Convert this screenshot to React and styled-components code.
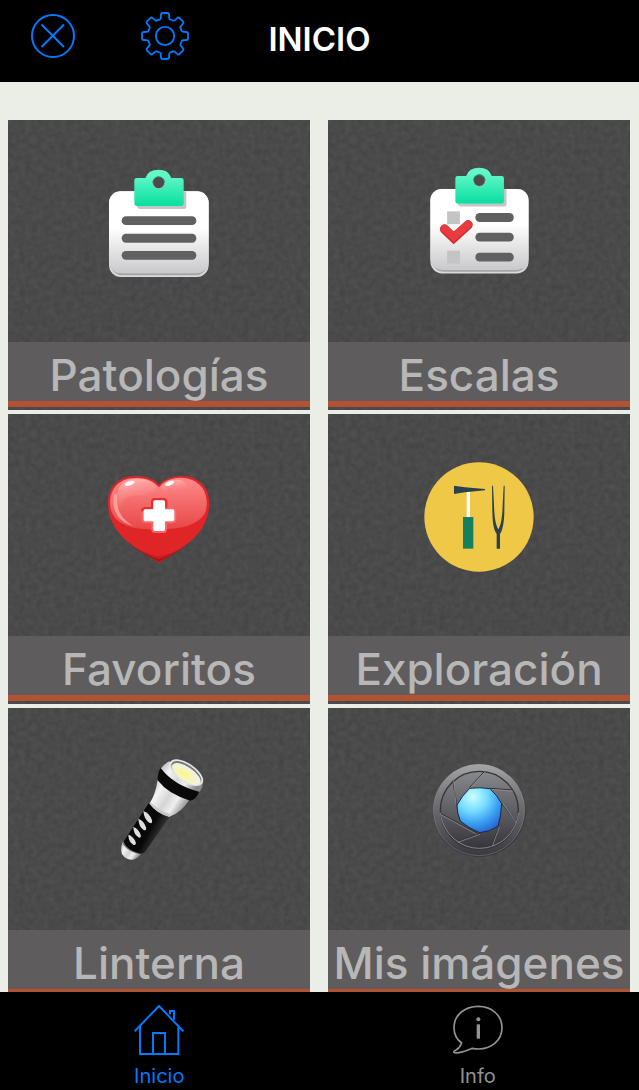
import { useState } from "react";
import styled, { createGlobalStyle } from "styled-components";

const TEETH = [0, 45, 90, 135, 180, 225, 270, 315];

const CloseIcon = () => (
	<svg width="44" height="44" viewBox="0 0 44 44" fill="none" stroke="currentColor" strokeWidth="2">
		<circle cx="22" cy="22" r="21" />
		<path d="M10.5 10.5 33 33M33 10.5 10.5 33" />
	</svg>
);

const GearIcon = () => (
	<svg width="48" height="48" viewBox="-72 -72 144 144" fill="none" stroke="currentColor" strokeWidth="5.5" strokeLinejoin="round">
		{TEETH.map((angle) => (
			<path
				key={angle}
				transform={`rotate(${angle})`}
				d="M-13 -51L-12 -64Q-12 -69 -7 -69H7Q12 -69 12 -64L13 -51L27 -45"
			/>
		))}
		<circle r="27.5" />
	</svg>
);

const HomeIcon = () => (
	<svg width="50" height="50" viewBox="102 75 150 150" fill="none" stroke="currentColor" strokeWidth="6">
		<path d="M104 154 177 78 250 154M120 139V222H235V139" />
		<path d="M159 222V159H195V222M210 103V93H222V119" />
	</svg>
);

const InfoIcon = () => (
	<svg width="50" height="50" viewBox="99 76 150 150" fill="none" stroke="currentColor" strokeWidth="5">
		<path
			strokeLinejoin="round"
			d="M125 190C109 178 102 162 102 144C102 106 134 80 175 80C216 80 246 108 246 144C246 182 214 208 175 208C168 208 162 207 157 206C141 211 123 222 104 219C99 218 102 214 107 212C116 207 121 200 125 190Z"
		/>
		<path d="M175 134V177" strokeWidth="10" />
		<circle cx="175" cy="119" r="6" fill="currentColor" stroke="none" />
	</svg>
);

const ClipboardBase = ({ id, children }) => (
	<>
		<defs>
			<linearGradient id={`${id}-paper`} x1="0" y1="0" x2="0" y2="1">
				<stop offset="0.45" stopColor="#fff" />
				<stop offset="1" stopColor="#c9c9cb" />
			</linearGradient>
			<linearGradient id={`${id}-clip`} x1="0" y1="0" x2="0" y2="1">
				<stop offset="0.15" stopColor="#62f8c8" />
				<stop offset="1" stopColor="#08dfa0" />
			</linearGradient>
		</defs>
		<rect x="57" y="124" width="299" height="257" rx="36" fill="#d9d9db" />
		<path d="M61 340Q72 370 96 370H317Q341 370 352 340V350Q340 376 316 376H98Q74 376 61 350Z" fill="#a5a5a8" />
		<rect x="57" y="124" width="299" height="245" rx="34" fill={`url(#${id}-paper)`} />
		<path d="M142 124H285Q289 124 289 130V170Q289 177 282 177H151Q142 177 140 168Z" fill="#c4c5c7" />
		<path
			fillRule="evenodd"
			fill={`url(#${id}-clip)`}
			d="M140 84H166Q174 59 206 59Q236 59 244 84H274Q281 84 281 91V160Q281 168 273 168H141Q133 168 133 160V91Q133 84 140 84ZM206 79A18 18 0 1 0 206 116A18 18 0 1 0 206 79Z"
		/>
		<circle cx="206" cy="98" r="18" fill="#4b4b4b" stroke="#b5eddd" strokeWidth="2" />
		<path d="M189 98A17 17 0 0 1 223 98" fill="none" stroke="#087d60" strokeWidth="3" />
		{children}
	</>
);

const PathologyArt = () => (
	<ClipboardBase id="pathology">
		<g fill="#606060">
			<rect x="95" y="199" width="224" height="26" rx="13" />
			<rect x="95" y="251" width="224" height="27" rx="13" />
			<rect x="95" y="303" width="224" height="26" rx="13" />
		</g>
	</ClipboardBase>
);

const ScalesArt = () => (
	<g transform="translate(5 -5) scale(0.985)">
		<ClipboardBase id="scales">
			<g fill="#c4c4c4">
				<rect x="108" y="192" width="39" height="39" />
				<rect x="108" y="312" width="39" height="39" />
			</g>
			<g fill="#606060">
				<rect x="194" y="197" width="117" height="27" rx="13" />
				<rect x="194" y="257" width="117" height="27" rx="13" />
				<rect x="194" y="318" width="117" height="27" rx="13" />
			</g>
			<path d="M100 246 128 273 172 233" fill="none" stroke="#d5252a" strokeWidth="28" strokeLinecap="round" />
			<path d="M100 244 128 270 172 231" fill="none" stroke="#e93a3e" strokeWidth="24" strokeLinecap="round" />
		</ClipboardBase>
	</g>
);

const HeartArt = () => (
	<>
		<defs>
			<linearGradient id="heart-shine" x1="0" y1="0" x2="0" y2="1">
				<stop offset="0" stopColor="#ff8a8a" />
				<stop offset="1" stopColor="#e74747" />
			</linearGradient>
			<linearGradient id="heart-gloss" x1="0" y1="0" x2="0.3" y2="1">
				<stop offset="0" stopColor="#ffc4c2" />
				<stop offset="1" stopColor="#fa7777" stopOpacity="0" />
			</linearGradient>
		</defs>
		<path d="M207 105C190 86 166 77 135 78C86 79 54 110 54 160C54 204 76 245 114 276C143 300 177 320 207 339C237 320 270 300 299 276C337 245 358 204 358 160C358 110 325 79 277 78C247 78 222 87 207 105Z" fill="#e02527" />
		<path d="M108 273Q152 308 207 327Q261 308 305 273Q270 303 207 337Q143 303 108 273Z" fill="#a91619" />
		<path d="M119 282Q161 309 207 320Q252 309 294 282Q258 307 207 327Q155 307 119 282Z" fill="#c51e20" />
		<path d="M207 112C190 92 166 83 136 84C90 85 61 112 60 158C60 181 68 197 82 211C119 240 168 239 213 238C266 237 325 229 346 187C359 148 345 96 290 85C254 79 223 91 207 112Z" fill="url(#heart-shine)" />
		<path d="M83 134C83 101 111 87 143 86C168 86 189 96 200 109C196 131 175 138 145 136C113 134 94 151 91 180C80 168 80 150 83 134Z" fill="url(#heart-gloss)" />
		<path d="M215 110C228 93 251 86 270 90C291 95 298 111 287 124C271 139 222 136 215 124Z" fill="url(#heart-gloss)" />
		<path d="M73 131C63 169 78 216 130 228C95 207 76 179 82 132Z" fill="#ffaaa6" opacity="0.8" />
		<ellipse cx="119" cy="100" rx="15" ry="6" transform="rotate(-18 119 100)" fill="#fff" />
		<ellipse cx="239" cy="100" rx="14" ry="6" transform="rotate(-22 239 100)" fill="#fff" />
		<path
			d="M195 151H220Q225 151 225 156V178H248Q253 178 253 184V208Q253 214 248 214H225V237Q225 243 220 243H195Q190 243 190 237V214H166Q161 214 161 208V184Q161 178 166 178H190V156Q190 151 195 151Z"
			fill="#fff"
			stroke="#f9686b"
			strokeWidth="12"
			paintOrder="stroke"
		/>
		<path d="M156 184Q156 174 166 174H186V155Q186 147 195 147H220Q229 147 229 155V173" fill="none" stroke="#e52c2e" strokeWidth="6" />
	</>
);

const ExamArt = () => (
	<>
		<circle cx="207" cy="201" r="164" fill="#efc847" />
		<path d="M170 126H180V204H170Z" fill="#fff" />
		<path d="M132 107 165 112 225 117V121L165 127 132 132Z" fill="#2b424d" />
		<path d="M159 201H190V296H159Z" fill="#15805f" />
		<path
			d="M246 107H249L252 165C253 202 257 225 265 238C273 225 277 202 278 165L281 107H284L283 187C282 220 278 241 270 252V296H260V252C251 240 248 220 247 187Z"
			fill="#2b424d"
		/>
	</>
);

const TorchArt = () => (
	<>
		<defs>
			<linearGradient id="torch-metal" x1="0" y1="0" x2="1" y2="0.6">
				<stop offset="0" stopColor="#a5a5a5" />
				<stop offset="0.3" stopColor="#f5f5f5" />
				<stop offset="0.55" stopColor="#d5d5d5" />
				<stop offset="0.75" stopColor="#efefef" />
				<stop offset="1" stopColor="#8a8a8a" />
			</linearGradient>
			<linearGradient id="torch-grip" x1="0" y1="0" x2="1" y2="0.6">
				<stop offset="0" stopColor="#050505" />
				<stop offset="0.65" stopColor="#080808" />
				<stop offset="0.85" stopColor="#343434" />
				<stop offset="1" stopColor="#050505" />
			</linearGradient>
			<radialGradient id="torch-light" cx="0.45" cy="0.6" r="0.55">
				<stop offset="0" stopColor="#fbf77b" />
				<stop offset="0.45" stopColor="#f7f6b4" />
				<stop offset="1" stopColor="#eef1ed" />
			</radialGradient>
		</defs>
		<path d="M99 304Q90 325 96 342Q108 361 128 359Q145 355 154 340Z" fill="url(#torch-metal)" />
		<path d="M99 307Q120 333 154 340L152 343Q115 337 98 312Z" fill="#737373" />
		<path d="M178 187Q200 217 240 229L165 336Q158 344 143 339Q112 329 100 306Z" fill="url(#torch-grip)" />
		<g fill="#dedede">
			<path d="M160 213Q177 218 186 240Q188 253 178 248Q162 238 160 213Z" />
			<path d="M145 236Q161 241 168 262Q170 274 161 270Q146 260 145 236Z" />
			<path d="M130 261Q145 266 152 284Q154 296 145 292Q130 282 130 261Z" />
			<path d="M115 284Q130 289 137 306Q139 317 130 314Q115 305 115 284Z" />
		</g>
		<path d="M203 119Q240 160 298 180Q274 218 238 230Q199 218 179 190Q197 162 203 119Z" fill="url(#torch-metal)" />
		<path d="M180 185Q203 210 242 223L238 231Q198 219 178 191Z" fill="#c8c8c8" />
		<path d="M238 64Q219 74 212 86Q251 136 327 157Q338 146 338 129Z" fill="url(#torch-metal)" />
		<path d="M212 84Q251 136 327 155Q321 176 301 182Q235 163 203 121Q203 98 212 84Z" fill="#090909" />
		<ellipse cx="289" cy="98" rx="58" ry="28" transform="rotate(34 289 98)" fill="#e4e4e4" />
		<ellipse cx="289" cy="98" rx="52" ry="23" transform="rotate(34 289 98)" fill="#777" />
		<ellipse cx="289" cy="102" rx="50" ry="21" transform="rotate(34 289 102)" fill="url(#torch-light)" />
	</>
);

const LensArt = () => (
	<>
		<defs>
			<linearGradient id="lens-ring" x1="0" y1="0" x2="0" y2="1">
				<stop offset="0" stopColor="#a5a5a5" />
				<stop offset="0.35" stopColor="#77777a" />
				<stop offset="1" stopColor="#39393f" />
			</linearGradient>
			<linearGradient id="lens-blades" x1="0" y1="0" x2="0" y2="1">
				<stop offset="0" stopColor="#88898c" />
				<stop offset="1" stopColor="#35343b" />
			</linearGradient>
			<radialGradient id="lens-glass" cx="0.35" cy="0.2" r="0.85">
				<stop offset="0" stopColor="#caffff" />
				<stop offset="0.38" stopColor="#78dcff" />
				<stop offset="0.7" stopColor="#399ff2" />
				<stop offset="1" stopColor="#2762d0" />
			</radialGradient>
		</defs>
		<ellipse cx="208" cy="214" rx="139" ry="137" fill="#303033" opacity="0.65" />
		<circle cx="207" cy="210" r="137" fill="url(#lens-ring)" stroke="#aaaaac" strokeWidth="1" />
		<circle cx="208" cy="211" r="117" fill="url(#lens-blades)" stroke="#333338" strokeWidth="4" />
		<path d="M91 218A118 118 0 0 0 326 218" fill="none" stroke="#c7c7ca" strokeWidth="2" opacity="0.8" />
		<path
			d="M178 143 222 96M240 145 309 150M275 190 317 246M266 260 244 319M210 280 145 304M200 279 93 221M141 197 128 122"
			fill="none"
			stroke="#303036"
			strokeWidth="3"
		/>
		<path d="M181 143 225 96M241 148 309 153M278 190 319 249M268 261 247 319M210 283 143 307M199 282 93 224M138 193 131 122" fill="none" stroke="#99999d" strokeWidth="2" />
		<path d="M179 145Q210 141 240 146Q262 166 275 191Q274 225 264 259Q239 276 209 278Q174 264 151 243Q141 220 141 195Q156 167 179 145Z" fill="url(#lens-glass)" stroke="#182a45" strokeWidth="3" />
	</>
);

const TILES = [
	{ id: "patologias", label: "Patologías", art: PathologyArt, box: "-3 33 420 420" },
	{ id: "escalas", label: "Escalas", art: ScalesArt, box: "-3 33 420 420" },
	{ id: "favoritos", label: "Favoritos", art: HeartArt, box: "-3 15 420 420" },
	{ id: "exploracion", label: "Exploración", art: ExamArt, box: "-3 15 420 420" },
	{ id: "linterna", label: "Linterna", art: TorchArt, box: "-3 27 420 420" },
	{ id: "imagenes", label: "Mis imágenes", art: LensArt, box: "-3 27 420 420" },
];

const App = () => {
	const [tab, setTab] = useState("inicio");

	return (
		<Screen>
			<GlobalStyle />
			<Header>
				<Actions>
					<IconButton type="button" aria-label="Cerrar">
						<CloseIcon />
					</IconButton>
					<IconButton type="button" aria-label="Ajustes">
						<GearIcon />
					</IconButton>
				</Actions>
				<Title>INICIO</Title>
			</Header>
			<Content>
				<TileGrid>
					{TILES.map(({ id, label, art: Art, box }) => (
						<Tile key={id} href={`#${id}`}>
							<Texture aria-hidden="true">
								<filter id={`grain-${id}`} x="0" y="0" width="100%" height="100%" colorInterpolationFilters="sRGB">
									<feTurbulence type="fractalNoise" baseFrequency="0.17" numOctaves="2" seed="4" />
									<feColorMatrix values="0.07 0 0 0 0.255  0.07 0 0 0 0.255  0.07 0 0 0 0.255  0 0 0 0 1" />
								</filter>
								<rect width="100%" height="100%" filter={`url(#grain-${id})`} />
							</Texture>
							<TileBody>
								<ArtArea>
									<svg width="140" height="140" viewBox={box} overflow="visible" aria-hidden="true">
										<Art />
									</svg>
								</ArtArea>
								<TileLabel>{label}</TileLabel>
							</TileBody>
						</Tile>
					))}
				</TileGrid>
			</Content>
			<TabBar>
				<Tab href="#inicio" $active={tab === "inicio"} onClick={() => setTab("inicio")}>
					<HomeIcon />
					<TabLabel>Inicio</TabLabel>
				</Tab>
				<Tab href="#info" $active={tab === "info"} onClick={() => setTab("info")}>
					<InfoIcon />
					<TabLabel>Info</TabLabel>
				</Tab>
			</TabBar>
		</Screen>
	);
};

export default App;

const GlobalStyle = createGlobalStyle`
	* {
		box-sizing: border-box;
	}
	body {
		margin: 0;
		background: #ebeee6;
		font-family: Inter, "Liberation Sans", sans-serif;
	}
`;

const Screen = styled.div`
	display: flex;
	flex-direction: column;
	height: 100vh;
`;

const Header = styled.header`
	display: grid;
	grid-template-columns: 1fr auto 1fr;
	align-items: center;
	flex-shrink: 0;
	padding: 12px 0 18px;
	background: #000;
`;

const Actions = styled.div`
	display: flex;
	align-items: center;
	gap: 66px;
	padding: 0 16px 4px 31px;
`;

const IconButton = styled.button`
	display: flex;
	padding: 0;
	border: none;
	background: none;
	color: #007aff;
	cursor: pointer;
`;

const Title = styled.h1`
	margin: 0;
	padding-top: 2px;
	color: #fff;
	font-size: 33px;
	font-weight: 600;
	line-height: 40px;
`;

const Content = styled.main`
	flex: 1;
	min-height: 0;
	padding: 38px 9px 4px 8px;
	overflow-y: auto;
	scrollbar-width: none;
`;

const TileGrid = styled.div`
	display: grid;
	grid-template-columns: repeat(2, minmax(0, 1fr));
	gap: 4px 18px;
`;

const Tile = styled.a`
	display: grid;
	overflow: hidden;
	background: #4a4a4a;
	text-decoration: none;
`;

const Texture = styled.svg`
	grid-area: 1 / 1;
	width: 100%;
	height: 100%;
`;

const TileBody = styled.div`
	grid-area: 1 / 1;
	z-index: 1;
	display: flex;
	flex-direction: column;
	min-width: 0;
	padding-bottom: 3px;
`;

const ArtArea = styled.div`
	display: flex;
	justify-content: center;
	padding: 41px 0;
`;

const TileLabel = styled.span`
	height: 65px;
	border-bottom: 6px solid #b35232;
	background: rgba(97, 94, 94, 0.9);
	color: #b7b7b7;
	font-size: 44px;
	font-weight: 500;
	line-height: 66px;
	text-align: center;
	white-space: nowrap;
`;

const TabBar = styled.nav`
	display: grid;
	grid-template-columns: 1fr 1fr;
	flex-shrink: 0;
	padding: 13px 2px 2px 0;
	background: #000;
`;

const Tab = styled.a`
	display: flex;
	flex-direction: column;
	align-items: center;
	gap: 9px;
	color: ${(props) => (props.$active ? "#007aff" : "#929292")};
	text-decoration: none;
`;

const TabLabel = styled.span`
	font-size: 20px;
	line-height: 24px;
`;
